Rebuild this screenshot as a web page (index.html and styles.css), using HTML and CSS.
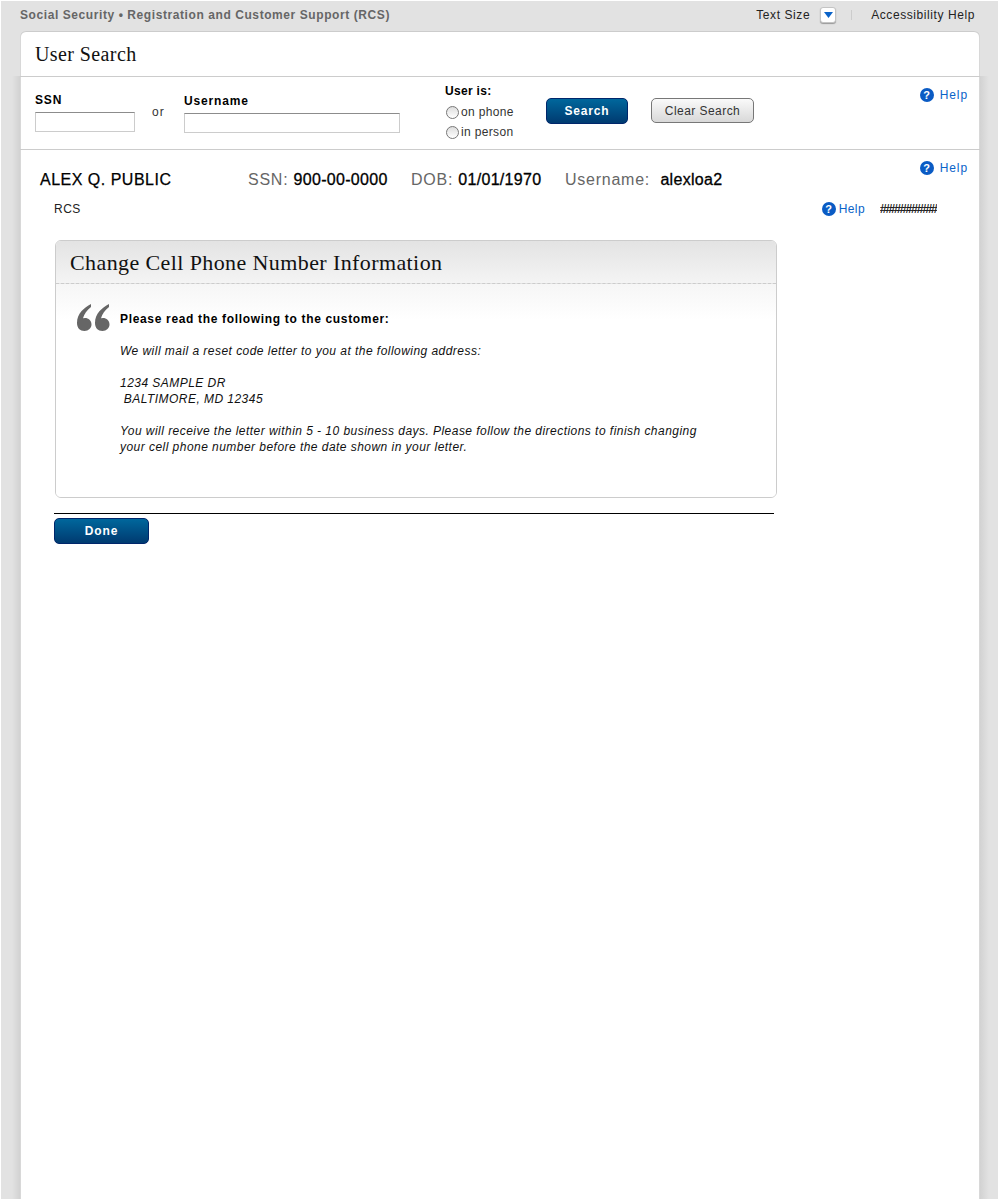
FILE: index.html
```html
<!DOCTYPE html>
<html lang="en">
<head>
<meta charset="utf-8">
<title>User Search</title>
<link rel="stylesheet" href="styles.css">
</head>
<body>
<div class="page">
  <header class="topbar">
    <div class="brand">Social Security • Registration and Customer Support (RCS)</div>
    <div class="tools">
      <span>Text Size</span>
      <span class="size-btn"><svg width="9" height="6" viewBox="0 0 9 6"><path d="M0 0h9L4.500 6z" fill="#0a63c9"/></svg></span>
      <span class="tool-sep"></span>
      <span>Accessibility Help</span>
    </div>
  </header>
  <div class="shell">
    <main class="card">
      <h1 class="card-title">User Search</h1>
      <section class="search">
        <div class="field field-ssn">
          <label class="label label-wide">SSN</label>
          <input class="input input-ssn" type="text">
        </div>
        <div class="or">or</div>
        <div class="field field-user">
          <label class="label label-wide">Username</label>
          <input class="input input-user" type="text">
        </div>
        <div class="useris">
          <div class="label">User is:</div>
          <label class="radio"><input type="radio" name="u">on phone</label>
          <label class="radio"><input type="radio" name="u">in person</label>
        </div>
        <button class="btn btn-primary btn-search" type="button">Search</button>
        <button class="btn btn-clear" type="button">Clear Search</button>
        <a class="help help-search"><span class="q">?</span><span class="help-gap">Help</span></a>
      </section>
      <section class="person">
        <div class="person-row">
          <div class="name">ALEX Q. PUBLIC</div>
          <div class="fact fact-ssn">SSN: <b>900-00-0000</b></div>
          <div class="fact fact-dob">DOB: <b>01/01/1970</b></div>
          <div class="fact">Username: &nbsp;<b>alexloa2</b></div>
          <a class="help help-person"><span class="q">?</span><span class="help-gap">Help</span></a>
        </div>
        <div class="crumb-row">
          <div class="crumb">RCS</div>
          <a class="help"><span class="q">?</span><span class="help-tight">Help</span></a>
          <div class="hashes">##########</div>
        </div>
      </section>
      <section class="panel">
        <h2 class="panel-title">Change Cell Phone Number Information</h2>
        <div class="panel-body">
          <svg class="quote" width="34" height="30" viewBox="0 0 34 30"><path fill="#666" d="M15 1C8 5 1 10 1 20c0 5 3 8 7.500 8 4 0 7-3 7-6.500 0-4-3-6.500-6.500-6.500l-2 .3C8 11 11 7 15 4zM33 1c-7 4-14 9-14 19 0 5 3 8 7.500 8 4 0 7-3 7-6.500 0-4-3-6.500-6.500-6.500l-2 .3C26 11 29 7 33 4z"/></svg>
          <div class="script">
            <p class="lead">Please read the following to the customer:</p>
            <p class="say">We will mail a reset code letter to you at the following address:</p>
            <p class="say">1234 SAMPLE DR<br>&nbsp;BALTIMORE, MD 12345</p>
            <p class="say">You will receive the letter within 5 - 10 business days. Please follow the directions to finish changing<br>your cell phone number before the date shown in your letter.</p>
          </div>
        </div>
      </section>
      <div class="rule"></div>
      <button class="btn btn-primary btn-done" type="button">Done</button>
    </main>
  </div>
</div>
</body>
</html>
```
FILE: styles.css
```css
* { box-sizing: border-box; }
html, body { margin: 0; padding: 0; background: #fff; }
body { font-family: "Liberation Sans", Arial, sans-serif; color: #000; }

.page { margin: 1px 2px 1px 1px; height: 1198px; background: #e2e2e2; display: flex; flex-direction: column; overflow: hidden; }

.topbar { height: 30px; flex: none; display: flex; justify-content: space-between; align-items: center; padding: 0 23px 2px 19px; }
.brand { font-size: 12px; font-weight: bold; color: #666; letter-spacing: 0.58px; }
.tools { display: flex; align-items: center; font-size: 12px; color: #222; letter-spacing: 0.58px; }
.size-btn { width: 16px; height: 16px; margin-left: 10px; background: #fff; border: 1px solid #c4c4c4; border-radius: 3px; box-shadow: 0 1px 1px #999; display: flex; align-items: center; justify-content: center; }
.tool-sep { width: 1px; height: 10px; background: #ccc; margin: 0 19px 0 15px; }

.shell { flex: 1; background:
  linear-gradient(to right, #e2e2e2 11px, #d2d2d2 19px, transparent 19px) left 45px / 19px 100% no-repeat,
  linear-gradient(to left, #e2e2e2 9px, #d2d2d2 18px, transparent 18px) right 45px / 18px 100% no-repeat,
  #e2e2e2; padding: 0 18px 0 19px; }

.card { height: 100%; background: #fff; border-radius: 6px 6px 0 0; box-shadow: inset 0 1px 0 #ccc, inset 1px 0 0 #d8d8d8, inset -1px 0 0 #d8d8d8; position: relative; padding-top: 1px; }
.card-title { margin: 0; padding: 10px 0 0 15px; font: normal 20px/24px "Liberation Serif", "Times New Roman", serif; letter-spacing: 0.4px; color: #111; border-bottom: 1px solid #ccc; box-sizing: content-box; height: 34px; }

.search { height: 73px; border-bottom: 1px solid #ccc; display: flex; align-items: flex-start; position: relative; padding-left: 15px; }
.label { font-size: 12px; font-weight: bold; line-height: 14px; letter-spacing: 0.3px; }
.label-wide { letter-spacing: 0.85px; }
.field { display: flex; flex-direction: column; }
.field-ssn { margin-top: 16px; }
.field-user { margin-top: 17px; margin-left: 19px; }
.input { margin: 5px 0 0; height: 20px; padding: 0; background: #fff; border: 1px solid #ccc; border-top: 1px solid #8c8c8c; display: block; }
.input-ssn { width: 100px; }
.input-user { width: 216px; }
.or { width: 13px; margin: 28px 0 0 17px; font-size: 12px; line-height: 14px; letter-spacing: 1px; color: #333; }

.useris { margin: 7px 0 0 45px; width: 101px; }
.radio { display: flex; align-items: center; height: 20px; font-size: 12px; letter-spacing: 0.35px; color: #333; }
.radio input { appearance: none; width: 13px; height: 13px; margin: 0 2px 0 1px; border: 1px solid #777; border-radius: 50%; background: linear-gradient(#ddd, #fff); }
.useris .label { margin-bottom: 4px; }

.btn { font-family: "Liberation Sans", Arial, sans-serif; font-size: 12px; padding: 0; cursor: pointer; }
.btn-primary { color: #fff; font-weight: bold; letter-spacing: 0.85px; background: linear-gradient(#00679c, #003a70); border: 1px solid #00266b; border-radius: 5px; }
.btn-search { width: 82px; height: 26px; margin-top: 21px; }
.btn-clear { width: 103px; height: 25px; margin: 21px 0 0 23px; color: #333; letter-spacing: 0.45px; background: linear-gradient(#fafafa, #d8d8d8); border: 1px solid #777; border-radius: 5px; }

.help { display: inline-flex; align-items: center; font-size: 12px; color: #0a63c9; letter-spacing: 0.4px; line-height: 14px; }
.q { width: 14px; height: 14px; border-radius: 50%; background: #0a5bc4; color: #fff; font-size: 11px; font-weight: bold; line-height: 14px; text-align: center; letter-spacing: 0; }
.help-gap { margin-left: 6px; letter-spacing: 0.9px; }
.help-tight { margin-left: 3px; }
.help-search { position: absolute; right: 12px; top: 11px; }

.person-row { height: 49px; padding: 21px 0 0 20px; display: flex; align-items: flex-start; position: relative; font-size: 16px; line-height: 18px; }
.name { width: 208px; letter-spacing: 0.5px; -webkit-text-stroke: 0.25px #000; }
.fact { color: #666; letter-spacing: 0.75px; }
.fact b { color: #000; font-weight: normal; letter-spacing: 0.3px; -webkit-text-stroke: 0.3px #000; }
.fact-ssn { width: 163px; }
.fact-dob { width: 154px; }
.help-person { position: absolute; right: 12px; top: 11px; }
.crumb-row { display: flex; align-items: center; height: 19px; padding: 0 43px 0 34px; font-size: 12px; }
.crumb { flex: 1; color: #222; letter-spacing: 0.5px; }
.hashes { margin-left: 15px; width: 57px; overflow: hidden; color: #000; letter-spacing: -1px; white-space: nowrap; -webkit-text-stroke: 0.2px #000; }

.panel { margin: 22px 0 0 35px; width: 722px; height: 258px; border: 1px solid #ccc; border-radius: 6px; background: #fff; overflow: hidden; }
.panel-title { margin: 0; height: 43px; padding: 9px 0 0 14px; font: normal 22px/26px "Liberation Serif", "Times New Roman", serif; letter-spacing: 0.4px; color: #111; background: linear-gradient(#e3e3e3, #f4f4f4); border-bottom: 1px dashed #ccc; }
.panel-body { display: flex; align-items: flex-start; padding: 19px 0 0 20px; background: linear-gradient(#f6f6f6, #fff 36px); height: 100%; }
.quote { flex: none; margin-right: 10px; }
.script { padding-top: 8px; width: 620px; }
.script p { margin: 0; }
.lead { font-size: 12px; font-weight: bold; line-height: 16px; letter-spacing: 0.67px; margin-bottom: 16px !important; }
.say { font-size: 12px; font-style: italic; line-height: 16px; letter-spacing: 0.46px; margin-bottom: 16px !important; color: #111; }

.rule { margin: 15px 0 0 34px; width: 720px; height: 1px; background: #000; }
.btn-done { display: block; width: 95px; height: 26px; margin: 4px 0 0 34px; }
```
